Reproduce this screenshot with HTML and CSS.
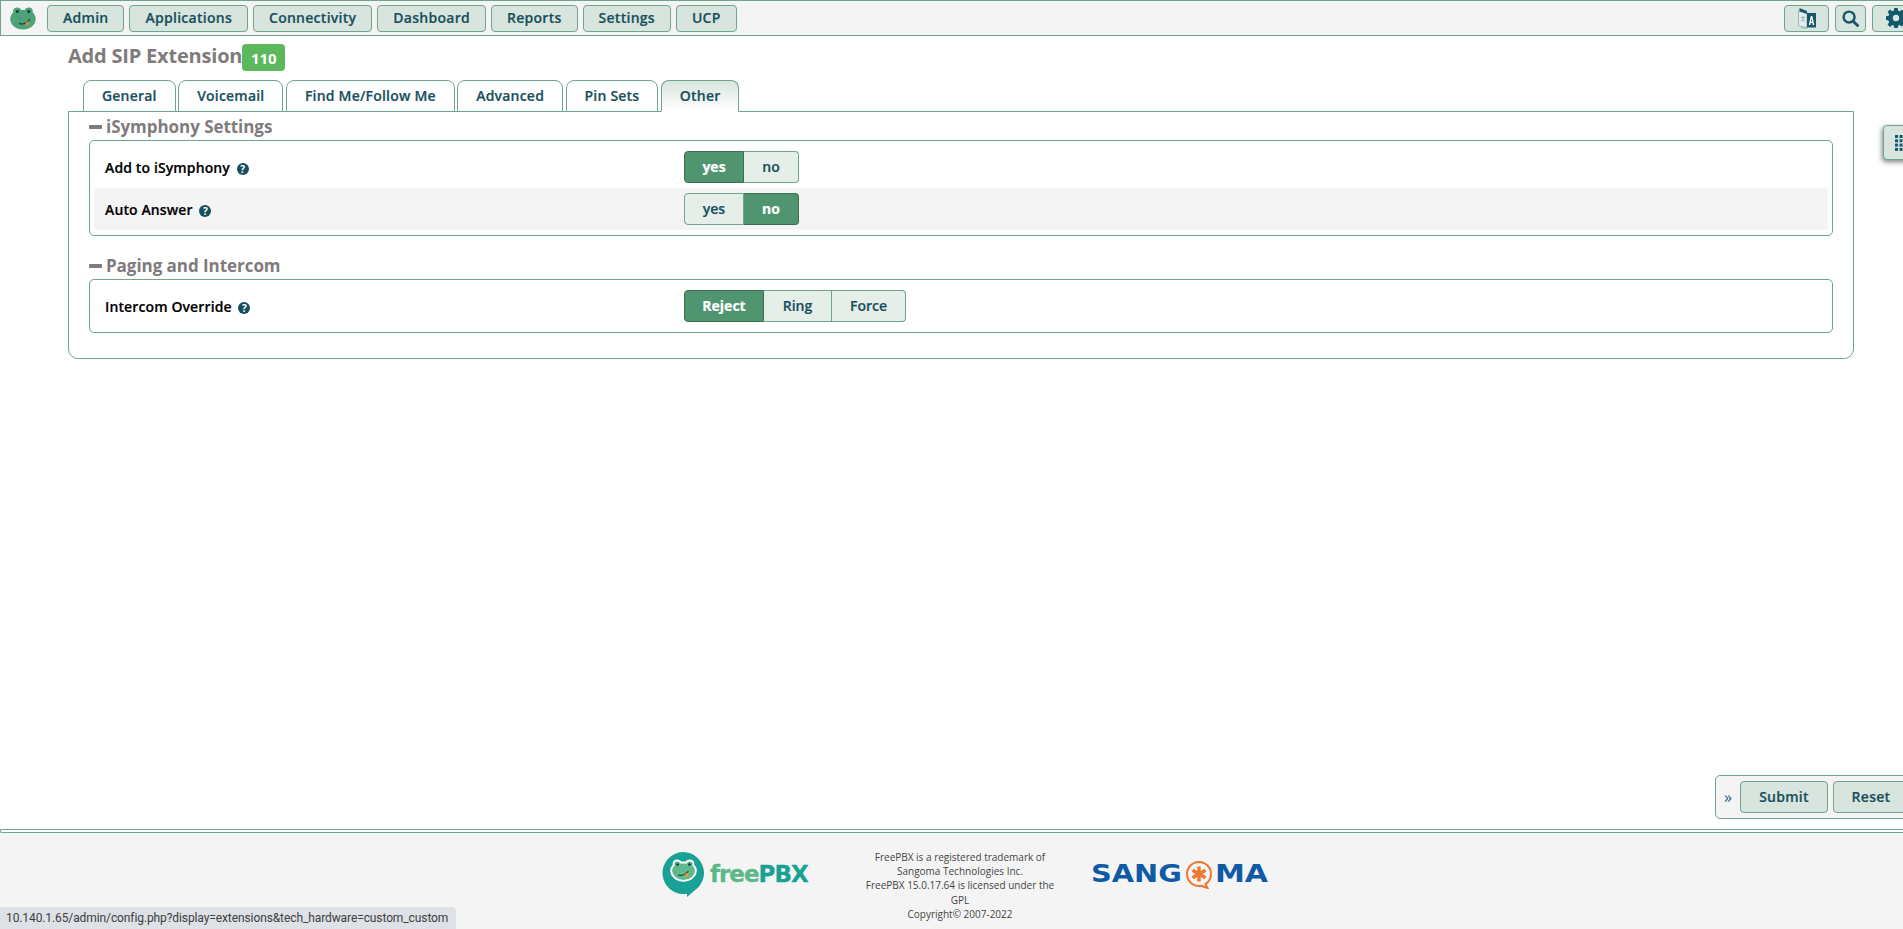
FILE: index.html
```html
<!DOCTYPE html>
<html lang="en">
<head>
    <meta charset="UTF-8">
    <title>FreePBX Administration</title>
    <link rel="stylesheet" href="styles.css">
</head>
<body>
    <nav class="navbar">
        <div class="nav-left">
            <svg class="frog" viewBox="0 0 26 23">
                <path d="M7 .5c2.300 0 3.700 1 4.200 2.500h3.600C15.300 1.500 16.700.5 19 .5c2.800 0 4.300 2.200 3.700 4.800 1.900 2 3.200 4.400 3.100 6.900-.2 5.800-5.700 10.300-12.800 10.300S.4 18 .2 12.200C.1 9.700 1.400 7.300 3.300 5.300 2.700 2.700 4.200.5 7 .5z" fill="#4da377"/>
                <circle cx="7.300" cy="4.600" r="1.500" fill="#14363a"/>
                <circle cx="18.700" cy="4.600" r="1.500" fill="#14363a"/>
                <path d="M9 16.500c3.500 1.200 8-.5 11-4.500" fill="none" stroke="#14363a" stroke-width="1.200"/>
                <circle cx="17.500" cy="16.500" r="2" fill="#c9963f"/>
            </svg>
            <a class="btn" href="#">Admin</a>
            <a class="btn" href="#">Applications</a>
            <a class="btn" href="#">Connectivity</a>
            <a class="btn" href="#">Dashboard</a>
            <a class="btn" href="#">Reports</a>
            <a class="btn" href="#">Settings</a>
            <a class="btn" href="#">UCP</a>
        </div>
        <div class="nav-right">
            <a class="btn icon-btn lang-btn" href="#">
                <svg viewBox="0 0 20 22" width="20" height="22">
                    <path d="M1.500 3.500l8.500 2v15l-8.500-1.500z" fill="#e6eceb" stroke="#8fa6ae" stroke-width=".8"/>
                    <path d="M10 6h9v14.500h-9z" fill="#14596b"/>
                    <path d="M2.500 1l7.500 3v3L2.500 4.500z" fill="#14596b"/>
                    <path d="M11.800 18l2-9h1.500l2 9h-1.500l-.4-2h-1.700l-.4 2zm2.100-3.300h1.200l-.6-3.200z" fill="#fff"/>
                    <path d="M4 10.500h4M6 9v1.500M7 10.500c-.5 2-1.500 3-3 4M5 12c.5 1 1.500 2 3 2.500" fill="none" stroke="#8fa6ae" stroke-width=".8"/>
                    <path d="M4 20.500c2 1.200 5 1.200 7.500 0" fill="none" stroke="#8fa6ae" stroke-width=".8"/>
                </svg>
            </a>
            <a class="btn icon-btn search-btn" href="#">
                <svg viewBox="0 0 18 18" width="17" height="17">
                    <circle cx="7.500" cy="7.500" r="5.800" fill="none" stroke="#14596b" stroke-width="2.600"/>
                    <path d="M11.800 11.800l4.700 4.700" stroke="#14596b" stroke-width="3" stroke-linecap="round"/>
                </svg>
            </a>
            <a class="btn icon-btn gear-btn" href="#">
                <svg viewBox="0 0 20 20" width="20" height="20">
                    <path d="M8.300 0h3.400l.5 2.700 1.500.6 2.300-1.600 2.400 2.400-1.600 2.300.6 1.500 2.600.5v3.400l-2.600.5-.6 1.500 1.600 2.300-2.400 2.400-2.300-1.600-1.500.6-.5 2.600H8.300l-.5-2.600-1.500-.6L4 19l-2.400-2.400 1.600-2.300-.6-1.500L0 11.700V8.300l2.600-.5.6-1.500L1.600 4 4 1.600l2.300 1.600 1.500-.6zM10 6.800a3.200 3.200 0 1 0 0 6.400 3.200 3.200 0 0 0 0-6.400z" fill="#14596b" fill-rule="evenodd"/>
                </svg>
            </a>
        </div>
    </nav>

    <main class="content">
        <div class="page-title">
            <h2>Add SIP Extension</h2>
            <span class="badge">110</span>
        </div>

        <ul class="tabs">
            <li class="tab">General</li>
            <li class="tab">Voicemail</li>
            <li class="tab">Find Me/Follow Me</li>
            <li class="tab">Advanced</li>
            <li class="tab">Pin Sets</li>
            <li class="tab active">Other</li>
        </ul>

        <div class="tab-panel">
            <section class="group">
                <h3 class="group-title"><span class="dash"></span>iSymphony Settings</h3>
                <div class="group-box box-first">
                    <div class="row">
                        <label>Add to iSymphony <span class="help">?</span></label>
                        <div class="toggle toggle-yesno">
                            <span class="opt on">yes</span>
                            <span class="opt">no</span>
                        </div>
                    </div>
                    <div class="row row-alt">
                        <label>Auto Answer <span class="help">?</span></label>
                        <div class="toggle toggle-yesno">
                            <span class="opt">yes</span>
                            <span class="opt on">no</span>
                        </div>
                    </div>
                </div>
            </section>
            <section class="group">
                <h3 class="group-title"><span class="dash"></span>Paging and Intercom</h3>
                <div class="group-box box-single">
                    <div class="row">
                        <label>Intercom Override <span class="help">?</span></label>
                        <div class="toggle toggle-intercom">
                            <span class="opt on">Reject</span>
                            <span class="opt">Ring</span>
                            <span class="opt">Force</span>
                        </div>
                    </div>
                </div>
            </section>
        </div>
    </main>

    <div class="float-tab">
        <svg viewBox="0 0 12 16" width="12" height="16" fill="#14596b">
            <rect x="0" y="0" width="3" height="3"/><rect x="4.500" y="0" width="3" height="3"/><rect x="9" y="0" width="3" height="3"/>
            <rect x="0" y="4.300" width="3" height="3"/><rect x="4.500" y="4.300" width="3" height="3"/><rect x="9" y="4.300" width="3" height="3"/>
            <rect x="0" y="8.600" width="3" height="3"/><rect x="4.500" y="8.600" width="3" height="3"/><rect x="9" y="8.600" width="3" height="3"/>
            <rect x="0" y="12.900" width="3" height="3"/><rect x="4.500" y="12.900" width="3" height="3"/><rect x="9" y="12.900" width="3" height="3"/>
        </svg>
    </div>

    <div class="action-bar">
        <span class="collapse">&raquo;</span>
        <a class="btn action-btn submit-btn" href="#">Submit</a>
        <a class="btn action-btn reset-btn" href="#">Reset</a>
    </div>

    <footer class="footer">
        <div class="footer-rule"></div>
        <div class="footer-body">
            <div class="logo-freepbx">
                <svg class="frog-bubble" viewBox="0 0 42 45" width="42" height="45">
                    <path d="M21 0a21 21 0 0 1 21 21c0 7.500-4 13.500-9.500 17.500L25 45v-3.300A21 21 0 1 1 21 0z" fill="#18a194"/>
                    <path d="M15 8.500c2 0 3.200.8 3.700 2h5.600c.5-1.200 1.700-2 3.700-2 2.700 0 3.900 2 3.300 4.300 1.700 1.800 2.700 3.800 2.600 6-.3 5.500-5.500 10-12.400 10s-12.100-4.500-12.400-10c-.1-2.200.9-4.200 2.600-6-.6-2.300.6-4.300 3.300-4.300z" fill="#5fb98a" stroke="#fff" stroke-width="1.800"/>
                    <circle cx="15.500" cy="12.500" r="1.300" fill="#14363a"/>
                    <circle cx="27.500" cy="12.500" r="1.300" fill="#14363a"/>
                    <path d="M16 23c3.500 1 7.500-.5 10.500-4" fill="none" stroke="#14363a" stroke-width="1.100"/>
                    <circle cx="25" cy="23" r="2" fill="#e69a3c"/>
                </svg>
                <span class="wordmark"><span class="free">free</span><span class="pbx">PBX</span></span>
            </div>
            <div class="footer-text">
                FreePBX is a registered trademark of<br>
                Sangoma Technologies Inc.<br>
                FreePBX 15.0.17.64 is licensed under the<br>
                GPL<br>
                Copyright&copy; 2007-2022
            </div>
            <div class="logo-sangoma">
                <span class="sang">SANG</span>
                <svg viewBox="0 0 32 29" width="32" height="29">
                    <path d="M16 2a12 12 0 0 1 12 12c0 4.300-2.200 8-5.500 10.100L24.500 28l-6.300-2.200c-.7.100-1.400.2-2.200.2a12 12 0 1 1 0-24z" fill="none" stroke="#f0762f" stroke-width="2"/>
                    <path d="M16 6.500v15M9.500 10.200l13 7.500M22.500 10.200l-13 7.500" stroke="#f0762f" stroke-width="3.400"/>
                </svg>
                <span class="ma">MA</span>
            </div>
        </div>
    </footer>

    <div class="status-bubble">10.140.1.65/admin/config.php?display=extensions&amp;tech_hardware=custom_custom</div>
</body>
</html>
```

FILE: styles.css
```css
* {
    box-sizing: border-box;
}
html, body {
    height: 100%;
}
body {
    margin: 0;
    font-family: "Open Sans", sans-serif;
    font-size: 14px;
    background-color: #fff;
    color: #000;
    overflow: hidden;
    display: flex;
    flex-direction: column;
}
.btn, .tab, .opt, .row label {
    -webkit-text-stroke: .2px;
}
.btn {
    display: inline-flex;
    align-items: center;
    justify-content: center;
    height: 27px;
    padding: 0 15px 2px;
    background-color: #d8e5df;
    border: 1px solid #6fa58c;
    border-radius: 4px;
    color: #17505c;
    font-size: 14px;
    font-weight: 600;
    letter-spacing: .27px;
    text-decoration: none;
}

/* top bar */
.navbar {
    display: flex;
    justify-content: space-between;
    align-items: center;
    flex: none;
    height: 36px;
    background-color: #f4f4f4;
    border: 1px solid #6fa58c;
    border-right: none;
}
.nav-left {
    display: flex;
    align-items: center;
    gap: 5px;
}
.frog {
    width: 26px;
    height: 23px;
    margin: 0 6px 0 9px;
}
.nav-right {
    display: flex;
    align-items: center;
    gap: 6px;
    margin-right: -17px;
}
.icon-btn {
    padding: 0;
}
.lang-btn {
    width: 45px;
}
.search-btn {
    width: 31px;
}
.gear-btn {
    justify-content: flex-start;
    width: 48px;
    padding-left: 13px;
}

/* page */
.content {
    flex: 1;
    padding: 8px 49px 0 68px;
}
.page-title {
    display: flex;
    height: 27px;
}
.page-title h2 {
    margin: 0;
    font-size: 20px;
    font-weight: 700;
    letter-spacing: -.2px;
    line-height: 24px;
    color: #7f7b7c;
}
.badge {
    display: flex;
    align-items: center;
    justify-content: center;
    width: 43px;
    height: 27px;
    background-color: #5cb85c;
    border-radius: 4px;
    color: #fff;
    font-size: 15px;
    font-weight: 700;
}
.tabs {
    display: flex;
    gap: 2.5px;
    list-style: none;
    margin: 9px 0 0 15px;
    padding: 0;
    position: relative;
    z-index: 1;
}
.tab {
    height: 32px;
    padding: 5px 18px 0;
    background-color: #fff;
    border: 1px solid #6fa58c;
    border-radius: 8px 8px 0 0;
    color: #17505c;
    font-weight: 600;
    letter-spacing: .2px;
}
.tab.active {
    background: linear-gradient(to bottom, #d8e5df, #fff);
    border-bottom-color: #fff;
}
.tab-panel {
    height: 248px;
    margin-top: -1px;
    padding: 2px 20px 0;
    border: 1px solid #6fa58c;
    border-radius: 0 0 10px 10px;
}
.group-title {
    display: flex;
    align-items: center;
    height: 26px;
    margin: 0;
    padding-bottom: 1px;
    font-size: 17px;
    font-weight: 700;
    letter-spacing: -.05px;
    color: #7f7b7c;
}
.dash {
    width: 13px;
    height: 4px;
    margin-right: 4px;
    background-color: #7f7b7c;
    border-radius: 1px;
}
.group-box {
    padding: 5px 4px 4px;
    border: 1px solid #6fa58c;
    border-radius: 5px;
}
.box-first {
    height: 96px;
    margin-bottom: 17px;
}
.box-single {
    height: 54px;
}
.row {
    display: flex;
    align-items: center;
    height: 42px;
    padding-left: 11px;
    font-weight: 600;
}
.row-alt {
    background-color: #f4f4f4;
    border-radius: 3px;
}
.row label {
    flex: none;
    width: 579px;
    letter-spacing: .12px;
}
.help {
    display: inline-block;
    width: 12px;
    height: 12px;
    margin-left: 3px;
    background-color: #17505c;
    border-radius: 50%;
    color: #fff;
    font-size: 10px;
    font-weight: 700;
    line-height: 12px;
    text-align: center;
    -webkit-text-stroke: 0;
}
.toggle {
    display: flex;
    height: 32px;
}
.opt {
    display: flex;
    align-items: center;
    justify-content: center;
    padding-bottom: 2px;
    background-color: #e6eeea;
    border: 1px solid #6fa58c;
    border-left-width: 0;
    color: #17505c;
    font-weight: 600;
}
.opt:first-child {
    border-left-width: 1px;
    border-radius: 4px 0 0 4px;
}
.opt:last-child {
    border-radius: 0 4px 4px 0;
}
.opt.on {
    background-color: #50956f;
    border-color: #3c6d55;
    color: #fff;
    font-weight: 700;
}
.toggle-yesno .opt:first-child {
    width: 60px;
}
.toggle-yesno .opt:last-child {
    width: 55px;
}
.toggle-intercom .opt:first-child {
    width: 80px;
}
.toggle-intercom .opt:nth-child(2) {
    width: 68px;
}
.toggle-intercom .opt:last-child {
    width: 74px;
}

/* floating bits */
.float-tab {
    position: fixed;
    top: 125px;
    right: -8px;
    display: flex;
    align-items: center;
    width: 28px;
    height: 35px;
    padding-left: 11px;
    background-color: #d8e5df;
    border: 1px solid #6fa58c;
    border-radius: 4px;
    box-shadow: -1px 2px 5px rgba(0, 0, 0, .5);
}
.action-bar {
    position: fixed;
    top: 775px;
    left: 1715px;
    display: flex;
    align-items: center;
    gap: 5px;
    width: 220px;
    height: 44px;
    padding-left: 8px;
    background-color: #f4f4f4;
    border: 1px solid #6fa58c;
    border-radius: 5px;
}
.collapse {
    width: 11px;
    color: #1c5f8a;
    font-size: 16px;
    line-height: 1;
}
.action-btn {
    height: 32px;
    padding: 0 0 2px;
}
.submit-btn {
    width: 88px;
}
.reset-btn {
    width: 76px;
}

/* footer */
.footer {
    flex: none;
    height: 100px;
    background-color: #f4f4f4;
}
.footer-rule {
    height: 4px;
    background-color: #fff;
    border: 1px solid #6fa58c;
    border-right: none;
    border-radius: 2px 0 0 2px;
}
.footer-body {
    display: flex;
    justify-content: center;
    padding: 18px 0 0 29px;
}
.logo-freepbx {
    display: flex;
    align-items: center;
    gap: 6px;
    width: 146px;
    height: 46px;
}
.wordmark {
    font-family: "DejaVu Sans", sans-serif;
    font-size: 23px;
    font-weight: 700;
    letter-spacing: -1px;
    -webkit-text-stroke: .3px;
    white-space: nowrap;
}
.free {
    color: #5cb886;
}
.pbx {
    color: #1aa194;
}
.footer-text {
    width: 190px;
    margin: -1px 36px 0 57px;
    color: #444;
    font-size: 10px;
    line-height: 14.2px;
    text-align: center;
}
.logo-sangoma {
    display: flex;
    align-items: center;
    width: 179px;
    height: 30px;
    margin-top: 8px;
    color: #0f5aa6;
    font-family: "DejaVu Sans", sans-serif;
    font-size: 24px;
    font-weight: 700;
}
.sang, .ma {
    display: inline-block;
    transform-origin: left center;
    white-space: nowrap;
}
.sang {
    width: 92px;
    transform: scaleX(1.2);
}
.ma {
    width: 54px;
    transform: scaleX(1.25);
}
.logo-sangoma svg {
    flex: none;
}
.status-bubble {
    position: fixed;
    left: 0;
    bottom: 0;
    height: 22px;
    padding: 0 8px 0 6px;
    background-color: #dee1e6;
    border-radius: 0 4px 0 0;
    color: #3c4043;
    font-family: Roboto, sans-serif;
    font-size: 12px;
    letter-spacing: -.1px;
    line-height: 22px;
    white-space: nowrap;
}
```
